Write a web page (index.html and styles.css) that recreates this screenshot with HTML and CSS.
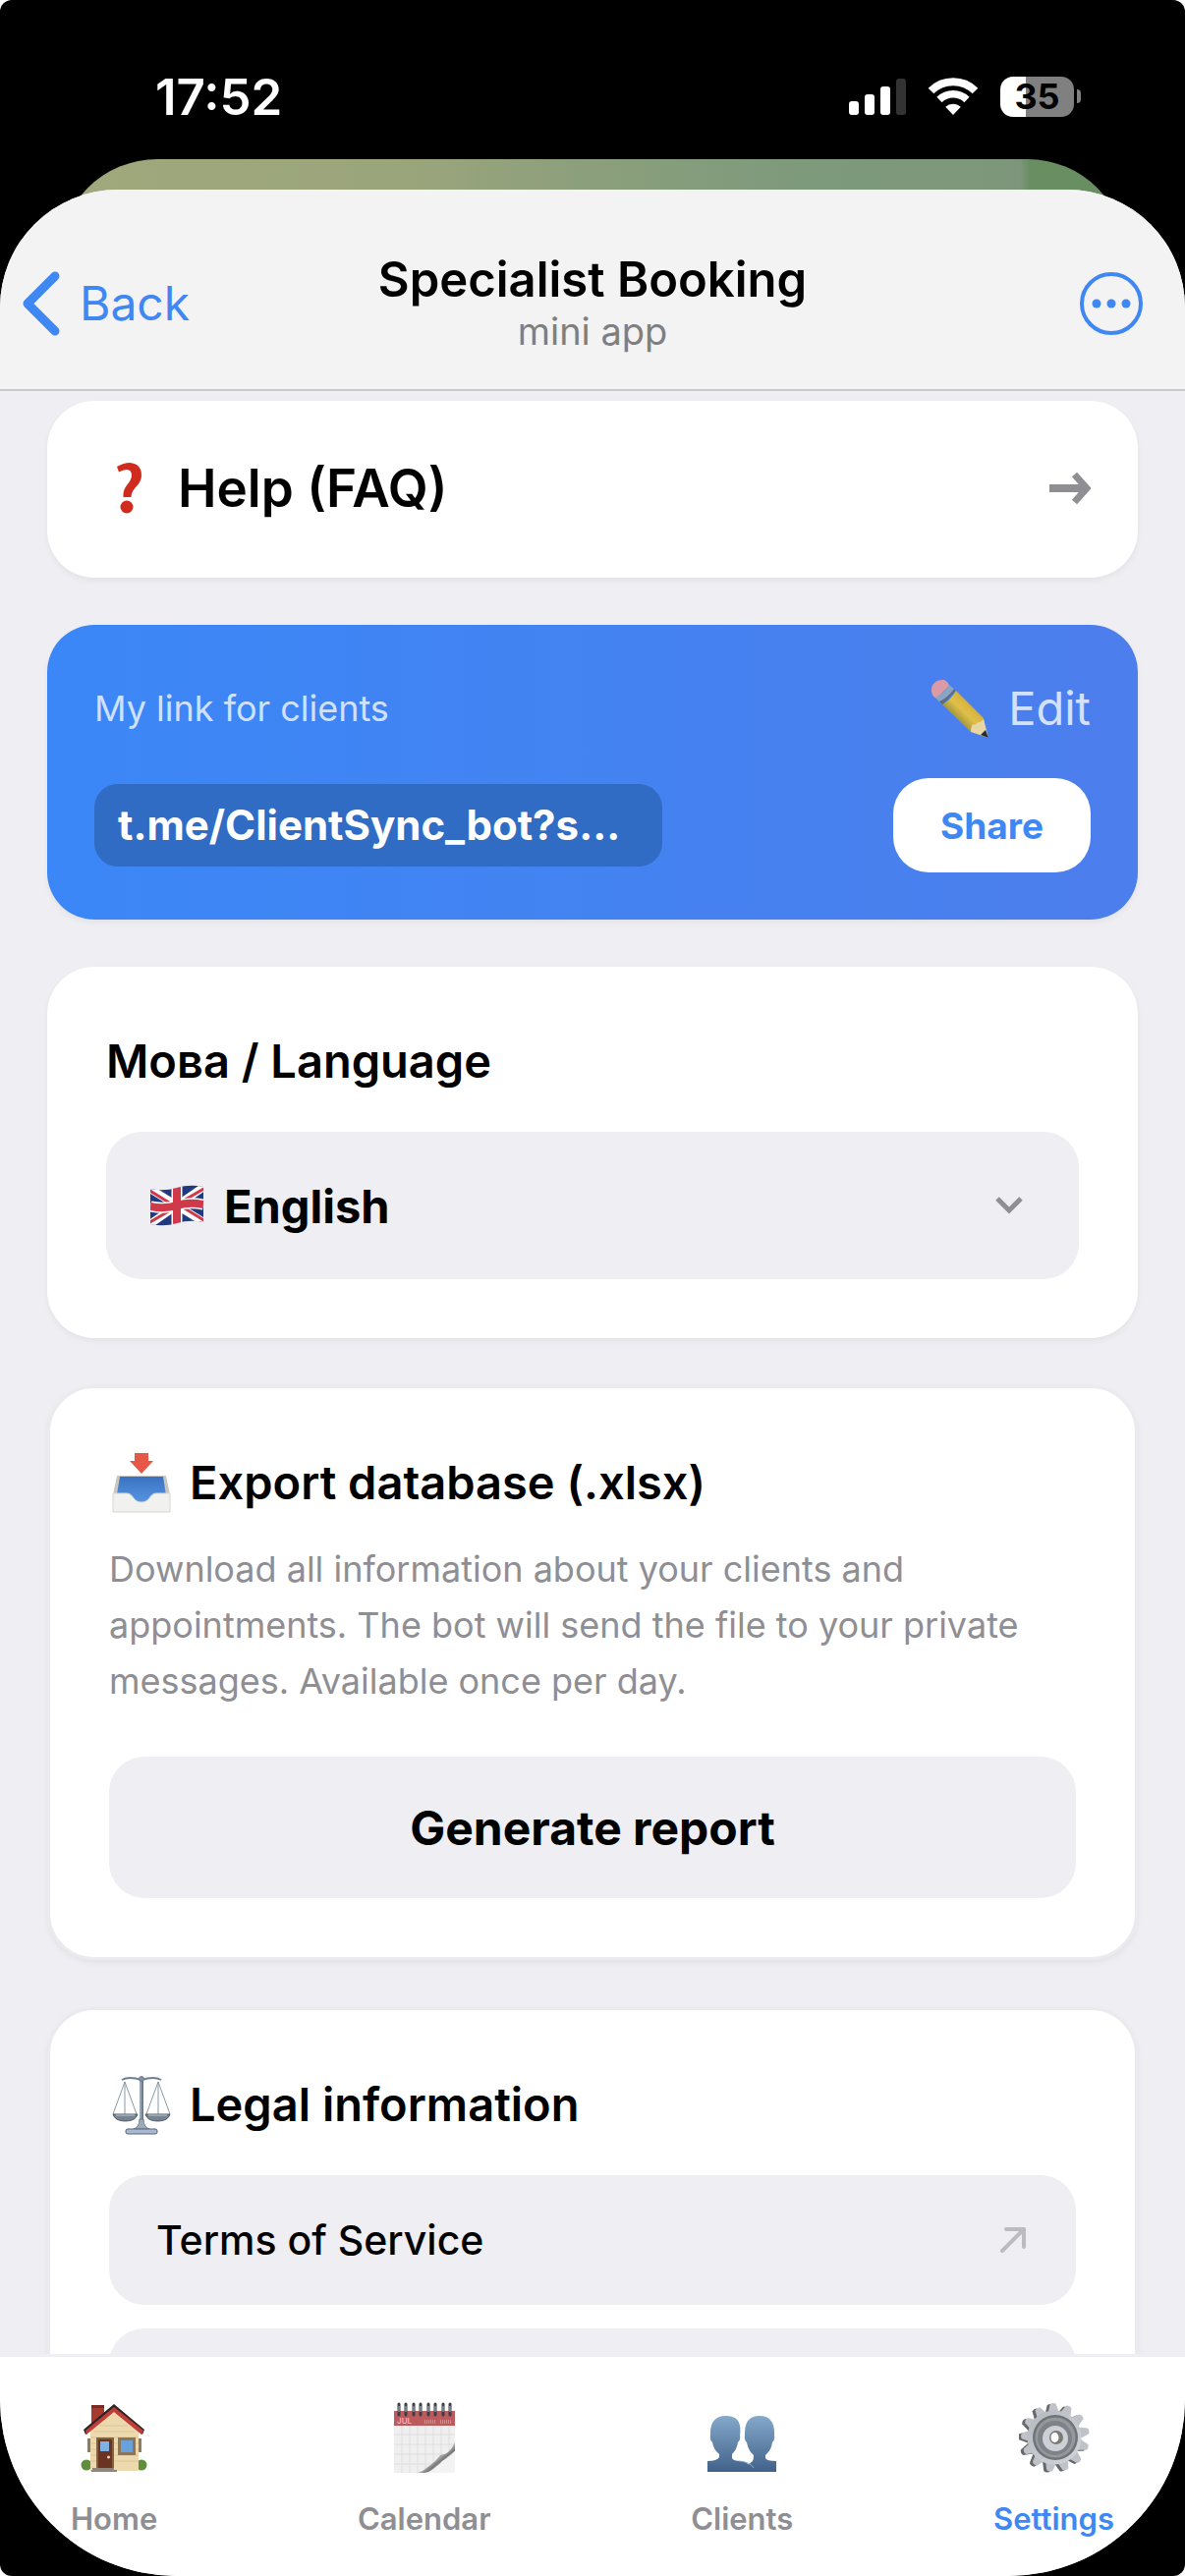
FILE: index.html
```html
<!DOCTYPE html>
<html lang="en">
<head>
  <meta charset="UTF-8" />
  <meta name="viewport" content="width=device-width, initial-scale=1.0"/>
  <title>Specialist Booking</title>
  <link rel="stylesheet" href="styles.css">
</head>
<body>

<div class="screen">
  <div class="status-bar">
    <span class="time">17:52</span>
    <div class="status-icons">
      <svg width="58" height="38" viewBox="0 0 58 38" fill="#fff" aria-hidden="true">
        <rect x="0" y="24" width="10" height="14" rx="3"/>
        <rect x="16" y="17" width="10" height="21" rx="3"/>
        <rect x="32" y="9" width="10" height="29" rx="3"/>
        <rect x="48" y="1" width="10" height="37" rx="3" fill="#333"/>
      </svg>
      <svg width="52" height="38" viewBox="0 0 52 38" fill="none" stroke="#fff" aria-hidden="true">
        <path d="M3.5 13.5a32 32 0 0 1 45 0" stroke-width="8"/>
        <path d="M12 22.500a20 20 0 0 1 28 0" stroke-width="7.500"/>
        <path d="M26 38l-7.800-8.300a11.500 11.500 0 0 1 15.600 0z" fill="#fff" stroke="none"/>
      </svg>
      <div class="battery"><span class="battery-level">35</span></div>
    </div>
  </div>

  <div class="chat-behind"></div>

  <div class="sheet">
    <header class="header">
      <button class="back" type="button">
        <svg width="38" height="66" viewBox="0 0 38 66" fill="none" stroke="currentColor" stroke-width="9" stroke-linecap="round" stroke-linejoin="round" aria-hidden="true">
          <path d="M33 5L5 33l28 28"/>
        </svg>
        Back
      </button>
      <div class="heading">
        <h1>Specialist Booking</h1>
        <p>mini app</p>
      </div>
      <button class="more" type="button" aria-label="More">
        <svg width="64" height="64" viewBox="0 0 64 64" fill="currentColor" aria-hidden="true">
          <circle cx="32" cy="32" r="30" fill="none" stroke="currentColor" stroke-width="4"/>
          <circle cx="17" cy="32" r="4.500"/>
          <circle cx="32" cy="32" r="4.500"/>
          <circle cx="47" cy="32" r="4.500"/>
        </svg>
      </button>
    </header>

    <main class="content">
      <a class="card help" href="#faq">
        <svg width="27" height="52" viewBox="0 0 27 52" aria-hidden="true">
          <path d="M1 4Q8 0 14 0Q26 1 26 13Q26 19 20 25Q15.500 30 15.500 35H7.500Q7 28 11 23Q16 17 16 13Q16 7 11 7Q7 7 3 9.500Z" fill="#cf2b1f"/>
          <circle cx="11" cy="45" r="6.500" fill="#cf2b1f"/>
        </svg>
        <span>Help (FAQ)</span>
        <svg class="arrow" width="42" height="34" viewBox="0 0 42 34" fill="none" stroke="#8e8e93" aria-hidden="true">
          <path d="M0 17H37" stroke-width="8"/>
          <path d="M25.500 3L38 17L25.500 31" stroke-width="7"/>
        </svg>
      </a>

      <section class="link-card">
        <div class="row">
          <span class="caption">My link for clients</span>
          <button class="edit" type="button">
            <svg width="60" height="60" viewBox="0 0 60 60" aria-hidden="true">
              <defs>
                <linearGradient id="wood" x1="0" y1="1" x2="1" y2="0">
                  <stop offset="0.350" stop-color="#a89a3e"/>
                  <stop offset="0.500" stop-color="#e0c04a"/>
                  <stop offset="0.650" stop-color="#d6b23c"/>
                </linearGradient>
              </defs>
              <path d="M2 9Q5 0 15 1Q19 3 20 7L7 20Q1 17 2 9Z" fill="#da9aa6"/>
              <path d="M20 6L27 12L13 27L6 19Q14 15 20 6Z" fill="#86a6c8"/>
              <path d="M10 23Q19 19 25 10L27 12L13 27Z" fill="#5d6c82"/>
              <path d="M27 12L55 40L57 55L42 54L13 26Q21 22 27 12Z" fill="url(#wood)"/>
              <path d="M42 54Q42 49 44 46Q47 48 49 44Q51 45 55 41L60 60Z" fill="#e8d5a4"/>
              <path d="M52 57L57 52L60 60Z" fill="#2b2d33"/>
            </svg>
            Edit
          </button>
        </div>
        <div class="row">
          <a class="link" href="#link">t.me/ClientSync_bot?s...</a>
          <button class="share" type="button">Share</button>
        </div>
      </section>

      <section class="card">
        <label class="card-title" for="language">Мова / Language</label>
        <div class="select-wrap">
          <svg class="flag" width="54" height="42" viewBox="0 0 54 42" aria-hidden="true">
            <defs>
              <clipPath id="wave"><path d="M0 4Q14 7 27 3Q40 -1 54 2V38Q40 35 27 39Q14 43 0 40Z"/></clipPath>
            </defs>
            <g clip-path="url(#wave)">
              <rect width="54" height="42" fill="#20397f"/>
              <path d="M-2 3L56 39M-2 41L56 1" stroke="#fff" stroke-width="8"/>
              <path d="M-2 5L27 23M56 37L27 19M-2 39L27 22M56 3L27 20" stroke="#d0394a" stroke-width="3"/>
              <path d="M27 0V42M0 22Q14 25 27 21Q40 17 54 20" fill="none" stroke="#fff" stroke-width="11"/>
              <path d="M27 0V42M0 22Q14 25 27 21Q40 17 54 20" fill="none" stroke="#d0394a" stroke-width="8"/>
            </g>
          </svg>
          <select id="language">
            <option selected>English</option>
            <option>Українська</option>
          </select>
          <svg class="chevron" width="28" height="18" viewBox="0 0 28 18" fill="none" stroke="#8e8e93" stroke-width="5" aria-hidden="true">
            <path d="M2 2L14 14L26 2"/>
          </svg>
        </div>
      </section>

      <section class="card outlined">
        <h2 class="card-title">
          <svg width="66" height="66" viewBox="0 0 66 66" aria-hidden="true">
            <defs>
              <linearGradient id="tray" x1="0" y1="0" x2="0" y2="1">
                <stop offset="0" stop-color="#3a72c0"/>
                <stop offset="1" stop-color="#5796e4"/>
              </linearGradient>
            </defs>
            <path d="M8 26H58L62 45H4Z" fill="#c9c8c0"/>
            <path d="M11 27H55L58 46L42 54H24L8 45Z" fill="url(#tray)"/>
            <path d="M4 44H18C25 44 24 53 33 53S41 44 48 44H62V63H4Z" fill="#f1f1ef" stroke="#d8d7d2"/>
            <path d="M26 3H40V11H45L33 24L21 11H26Z" fill="#e65748"/>
          </svg>
          Export database (.xlsx)
        </h2>
        <p class="description">Download all information about your clients and appointments. The bot will send the file to your private messages. Available once per day.</p>
        <button class="generate" type="button">Generate report</button>
      </section>

      <section class="card outlined">
        <h2 class="card-title">
          <svg width="66" height="66" viewBox="0 0 66 66" fill="none" stroke="#6f7f92" aria-hidden="true">
            <path d="M13 8Q20 4 33 8Q46 4 53 8" stroke-width="2"/>
            <path d="M16 10L4 43M16 10L28 43M16 10V43M50 10L38 43M50 10L62 43M50 10V43" stroke="#8b97a5"/>
            <path d="M33 6V54" stroke-width="4"/>
            <path d="M32 6V54" stroke="#c6d0dc"/>
            <path d="M4 43H29Q27 50 16.500 50T4 43Z" fill="#77848f" stroke="#4c5965"/>
            <path d="M37 43H62Q60 50 49.500 50T37 43Z" fill="#77848f" stroke="#4c5965"/>
            <path d="M7 44H26M40 44H59" stroke="#c3ccd4"/>
            <path d="M31 48Q31 56 25 58H41Q35 56 35 48Z" fill="#9eabbb"/>
            <rect x="17" y="58" width="32" height="5" rx="2" fill="#a9b9d2" stroke="#566577"/>
            <circle cx="33" cy="7" r="2.500" fill="#8190a2"/>
          </svg>
          Legal information
        </h2>
        <nav class="legal-links">
          <a href="#terms">
            Terms of Service
            <svg width="26" height="26" viewBox="0 0 26 26" fill="none" stroke="#bcbcc0" stroke-width="4" stroke-linecap="round" stroke-linejoin="round" aria-hidden="true">
              <path d="M2 24L24 2M6 2H24V20"/>
            </svg>
          </a>
          <a href="#privacy" aria-label="Privacy"></a>
        </nav>
      </section>
    </main>

    <nav class="tab-bar">
      <a href="#home">
        <svg width="72" height="72" viewBox="0 0 72 72" aria-hidden="true">
          <circle cx="8" cy="64" r="5.500" fill="#5f8f3c"/>
          <circle cx="64" cy="64" r="5.500" fill="#5f8f3c"/>
          <path d="M9 37h3v14H9zM61 37h3v14h-3z" fill="#8b7c62"/>
          <rect x="13" y="3" width="13" height="23" fill="#a63a31"/>
          <path d="M13 3h13v3H13z" fill="#7c2a24"/>
          <path d="M12 70V28L36 6L61 28V70Z" fill="#ecd9ae"/>
          <path d="M22 24H50M15 30H57M12 36H61M12 42H61M12 48H61M12 54H61M12 60H61" stroke="#dbc595"/>
          <path d="M5 28L36 2L67 28L65 33L36 9L7 33Z" fill="#2d2523"/>
          <path d="M7 29L36 5L66 29L64 33L36 10L8 33Z" fill="#c03d38"/>
          <rect x="18" y="36" width="18" height="31" fill="#84613f"/>
          <rect x="20" y="38" width="14" height="29" fill="#6b3322"/>
          <rect x="22" y="40" width="9" height="10" fill="#7fb2e2"/>
          <circle cx="30.500" cy="56" r="1.500" fill="#f0d9b4"/>
          <rect x="40" y="36" width="18" height="18" fill="#8b7758"/>
          <rect x="43" y="39" width="12" height="12" fill="#69a1dc"/>
          <path d="M14 67h22v2h3v2H13v-2h1z" fill="#8f867c"/>
        </svg>
        Home
      </a>
      <a href="#calendar">
        <svg width="72" height="72" viewBox="0 0 72 72" aria-hidden="true">
          <defs>
            <linearGradient id="curl" x1="0" y1="0" x2="1" y2="1">
              <stop offset="0.300" stop-color="#fff"/>
              <stop offset="0.480" stop-color="#ccc"/>
              <stop offset="0.620" stop-color="#777"/>
              <stop offset="0.720" stop-color="#ddd"/>
            </linearGradient>
          </defs>
          <rect x="5" y="9" width="62" height="63" fill="#efefef"/>
          <path d="M13 24V72M21 24V72M29 24V72M37 24V72M45 24V72M53 24V72M61 24V72M5 33H67M5 43H67M5 53H67M5 63H67" stroke="#dedede"/>
          <rect x="5" y="9" width="62" height="15" fill="#bd5a5e"/>
          <text class="month" x="8" y="22">JUL</text>
          <path d="M36 20h12M52 20h12" stroke="#d58a8c" stroke-width="4" stroke-dasharray="1 1"/>
          <path d="M67 41Q61 54 52 54Q46 62 38 67Q34 71 28 72H40L67 50Z" fill="url(#curl)"/>
          <path d="M67 50Q61 57 54 60Q47 70 36 72H67Z" fill="#f3f3f3"/>
          <path d="M10 2v11M17 2v11M25 2v11M32 2v11M40 2v11M47 2v11M55 2v11M62 2v11" stroke="#3c3f42" stroke-width="3" stroke-linecap="round"/>
          <path d="M10 4v6M17 4v6M25 4v6M32 4v6M40 4v6M47 4v6M55 4v6M62 4v6" stroke="#a9c3cb"/>
        </svg>
        Calendar
      </a>
      <a href="#clients">
        <svg width="72" height="72" viewBox="0 0 72 72" aria-hidden="true">
          <defs>
            <linearGradient id="people" gradientUnits="userSpaceOnUse" x1="0" y1="14" x2="0" y2="71">
              <stop offset="0" stop-color="#84a9ca"/>
              <stop offset="1" stop-color="#41618a"/>
            </linearGradient>
          </defs>
          <path d="M34 71L47 60Q48 58 48 54Q42 49 41 41Q38 38 39 34Q38 14 54 14T69 34Q70 38 67 41Q66 49 60 54V57Q61 60 71 60V71Z" fill="url(#people)"/>
          <path d="M1 71V60Q11 60 13 56V53Q7 48 6 41Q3 38 4 34Q3 14 20 14T34 34Q35 38 32 41Q31 48 26 53V57Q27 60 35 60Q44 61 48 71Z" fill="url(#people)"/>
          <path d="M33 60Q45 61 48 67" fill="none" stroke="#8aadca"/>
        </svg>
        Clients
      </a>
      <a class="active" href="#settings" aria-current="page">
        <svg width="72" height="72" viewBox="0 0 72 72" aria-hidden="true">
          <defs>
            <linearGradient id="steel" x1="0" y1="0" x2="1" y2="1">
              <stop offset="0" stop-color="#b4b8bc"/>
              <stop offset="1" stop-color="#d3d5da"/>
            </linearGradient>
            <path id="tooth" d="M30 12L33 2Q36 0 39 2L42 12Z"/>
            <g id="teeth">
              <use href="#tooth" transform="rotate(-4 36 36)"/>
              <use href="#tooth" transform="rotate(23.700 36 36)"/>
              <use href="#tooth" transform="rotate(51.400 36 36)"/>
              <use href="#tooth" transform="rotate(79.100 36 36)"/>
              <use href="#tooth" transform="rotate(106.800 36 36)"/>
              <use href="#tooth" transform="rotate(134.500 36 36)"/>
              <use href="#tooth" transform="rotate(162.200 36 36)"/>
              <use href="#tooth" transform="rotate(189.900 36 36)"/>
              <use href="#tooth" transform="rotate(217.600 36 36)"/>
              <use href="#tooth" transform="rotate(245.300 36 36)"/>
              <use href="#tooth" transform="rotate(273 36 36)"/>
              <use href="#tooth" transform="rotate(300.700 36 36)"/>
              <use href="#tooth" transform="rotate(328.400 36 36)"/>
            </g>
          </defs>
          <use href="#teeth" x="-2" y="1" fill="#66686a"/>
          <use href="#teeth" x="1" fill="#bfc3c9"/>
          <circle cx="36" cy="36" r="27.500" fill="url(#steel)"/>
          <circle cx="37" cy="36" r="23" fill="#707377"/>
          <circle cx="37" cy="36" r="20.500" fill="#95999d"/>
          <circle cx="36.500" cy="36.500" r="17.500" fill="#7f8387"/>
          <circle cx="37" cy="37" r="13" fill="#cdd0d7"/>
          <circle cx="38" cy="36" r="7" fill="#7c7975"/>
          <ellipse cx="36.500" cy="36" rx="4" ry="5" fill="#fff"/>
        </svg>
        Settings
      </a>
    </nav>
  </div>
</div>

</body>
</html>
```

FILE: styles.css
```css
* {
  box-sizing: border-box;
}

body {
  margin: 0;
  background: #fff;
  color: #000;
  font-family: Inter, 'Noto Sans', sans-serif;
}

h1, h2, p {
  margin: 0;
}

a {
  color: inherit;
  text-decoration: none;
}

button, select {
  border: none;
  font-family: inherit;
  cursor: pointer;
}

svg {
  display: block;
  flex-shrink: 0;
}

.screen {
  display: flex;
  flex-direction: column;
  height: 100vh;
  background: #000;
  border-radius: 12px;
  overflow: hidden;
}

/* status bar */
.status-bar {
  display: flex;
  justify-content: space-between;
  align-items: center;
  flex-shrink: 0;
  height: 162px;
  padding: 34px 106px 0 158px;
  color: #fff;
}

.time {
  font-size: 51px;
  font-weight: 600;
}

.status-icons {
  display: flex;
  align-items: center;
  gap: 22px;
}

.battery {
  display: flex;
  align-items: center;
  gap: 3px;
}

.battery::after {
  content: '';
  width: 4px;
  height: 14px;
  border-radius: 0 7px 7px 0;
  background: #808080;
}

.battery-level {
  width: 75px;
  border-radius: 13px;
  background: linear-gradient(90deg, #fff 35%, #808080 35%);
  color: #000;
  font-size: 36px;
  font-weight: 700;
  line-height: 41px;
  text-align: center;
}

/* chat that stays visible above the sheet */
.chat-behind {
  flex-shrink: 0;
  height: 120px;
  margin: 0 60px -89px;
  border-radius: 100px 100px 0 0;
  background: linear-gradient(90deg, transparent 90%, #688e62 91%), linear-gradient(90deg, #a0a87c, #9ba57b 32%, #8b9f7c 50%, #7d9a7b 70%, #7d957c);
}

.sheet {
  display: flex;
  flex-direction: column;
  flex: 1;
  min-height: 0;
  border-radius: 120px 120px 180px 180px;
  background: #eeeef3;
  overflow: hidden;
}

.header {
  display: grid;
  grid-template-columns: 1fr auto 1fr;
  align-items: center;
  flex-shrink: 0;
  height: 205px;
  padding: 28px 23px 0;
  border-bottom: 2px solid #c9c9cc;
  background: #f3f3f3;
}

.back {
  display: flex;
  align-items: center;
  gap: 20px;
  justify-self: start;
  padding: 0;
  background: none;
  color: #3f87f2;
  font-size: 48px;
}

.heading {
  text-align: center;
}

.heading h1 {
  font-size: 49px;
  font-weight: 600;
  line-height: 56px;
}

.heading p {
  color: #7f7f7f;
  font-size: 38px;
  line-height: 48px;
}

.more {
  justify-self: end;
  margin-right: 20px;
  padding: 0;
  background: none;
  color: #3f87f2;
}

/* settings cards */
.content {
  display: flex;
  flex-direction: column;
  gap: 48px;
  flex: 1;
  min-height: 0;
  padding: 10px 48px 0;
  overflow: hidden;
}

.card, .link-card {
  flex-shrink: 0;
  border-radius: 48px;
  box-shadow: 0 3px 6px rgba(0, 0, 0, 0.05);
}

.card {
  padding: 60px;
  background: #fff;
}

.card.outlined {
  border: 3px solid #ebebef;
}

.help {
  display: flex;
  align-items: center;
  gap: 36px;
  height: 180px;
  padding: 0 48px 2px 70px;
  font-size: 53px;
  font-weight: 600;
}

.help .arrow {
  margin-left: auto;
}

.link-card {
  padding: 48px;
  background: linear-gradient(90deg, #3b87f7, #4c7eec);
}

.row {
  display: flex;
  justify-content: space-between;
  align-items: center;
}

.row + .row {
  margin-top: 34px;
}

.caption {
  color: #cfe1fd;
  font-size: 36px;
}

.edit {
  display: flex;
  align-items: center;
  gap: 20px;
  padding: 0;
  background: none;
  color: #d3e1fc;
  font-size: 47px;
  line-height: 74px;
}

.link {
  min-width: 57%;
  padding: 0 24px;
  border-radius: 24px;
  background: #306bc4;
  color: #fff;
  font-size: 42px;
  font-weight: 700;
  line-height: 84px;
}

.share {
  height: 96px;
  padding: 0 48px;
  border-radius: 36px;
  background: #fff;
  color: #3f87f2;
  font-size: 37px;
  font-weight: 700;
}

.card-title {
  display: flex;
  align-items: center;
  gap: 16px;
  font-size: 47px;
  font-weight: 600;
  line-height: 72px;
}

.select-wrap {
  display: grid;
  align-items: center;
  margin-top: 36px;
}

.select-wrap > * {
  grid-area: 1 / 1;
}

.select-wrap .flag {
  z-index: 1;
  margin-left: 45px;
}

.select-wrap .chevron {
  justify-self: end;
  margin-right: 57px;
}

select {
  appearance: none;
  width: 100%;
  height: 150px;
  padding: 0 120px;
  border-radius: 36px;
  background: #eeeef3;
  color: #000;
  font-size: 47px;
  font-weight: 700;
}

.description {
  margin-top: 24px;
  color: #8e8e93;
  font-size: 36px;
  line-height: 57px;
}

.generate {
  width: 100%;
  height: 144px;
  margin-top: 48px;
  border-radius: 36px;
  background: #eeeef3;
  color: #000;
  font-size: 48px;
  font-weight: 700;
}

.legal-links {
  display: flex;
  flex-direction: column;
  gap: 24px;
  margin-top: 36px;
}

.legal-links a {
  display: flex;
  justify-content: space-between;
  align-items: center;
  height: 132px;
  padding: 0 51px 0 48px;
  border-radius: 36px;
  background: #eeeef3;
  font-size: 41px;
  font-weight: 500;
}

/* bottom tabs */
.tab-bar {
  display: flex;
  justify-content: space-between;
  flex-shrink: 0;
  height: 226px;
  padding: 46px 72px 0;
  border-top: 3px solid #eeeef3;
  background: #fff;
}

.tab-bar a {
  display: flex;
  flex-direction: column;
  align-items: center;
  gap: 28px;
  color: #8e8e93;
  font-size: 31px;
  font-weight: 600;
  line-height: 38px;
}

.tab-bar .active {
  color: #3f87f2;
}

.month {
  fill: #e9b9ba;
  font-size: 8px;
}
```
